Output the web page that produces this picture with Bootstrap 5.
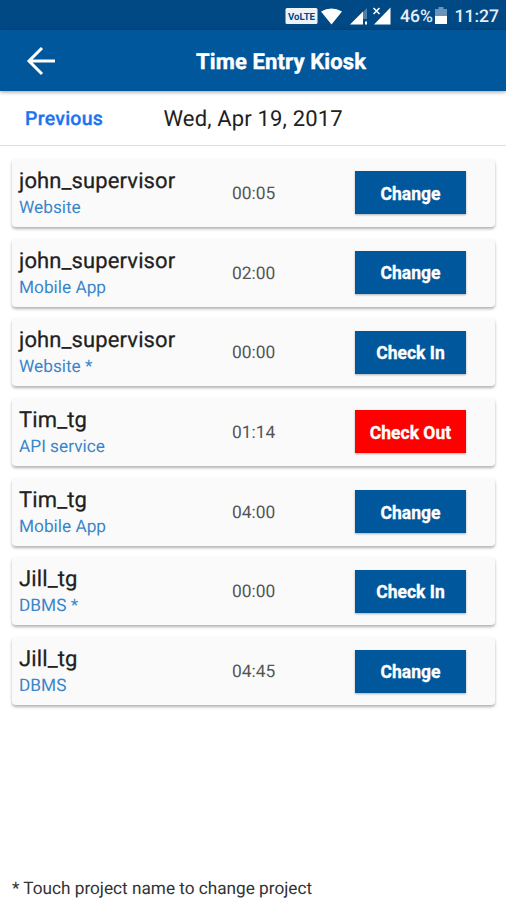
<!DOCTYPE html>
<html lang="en">
<head>
<meta charset="utf-8">
<meta name="viewport" content="width=device-width, initial-scale=1">
<title>Time Entry Kiosk</title>
<link href="https://cdn.jsdelivr.net/npm/bootstrap@5.3.0/dist/css/bootstrap.min.css" rel="stylesheet">
<style>
body{font-family:Roboto,"Liberation Sans",sans-serif;background:#fff;color:#212121;height:900px;overflow:hidden;text-rendering:geometricPrecision}
.status-bar{height:30px;background:#004984;color:#e8eef5;font-size:17.5px;font-weight:500;line-height:30px;padding:3px 7px 0 285px}
.app-bar{height:61px;background:#01579b;box-shadow:0 1px 4px rgba(0,0,0,.4);padding-left:26px;z-index:1}
.app-title{font-size:22px;font-weight:700;-webkit-text-stroke:.4px #fff;margin-left:140px;padding-top:3px;letter-spacing:.13px}
.date-bar{height:55px;border-bottom:1px solid #dedede;padding:2px 0 0 25px}
.prev-link{font-size:19.5px;font-weight:500;color:#1a73f0;width:138.5px;letter-spacing:.25px;-webkit-text-stroke:.3px #1a73f0}
.day-text{font-size:22px;color:#212121;letter-spacing:.15px;padding-top:1px}
.entries{padding:12.9px 11px 0 12px;gap:11.7px}
.entry{height:68px;background:#fafafa;border-radius:4px;box-shadow:0 2px 3px rgba(0,0,0,.3);padding-left:7px}
.who{width:213px;padding-top:4px}
.who-name{font-size:22px;line-height:26px;letter-spacing:.12px;-webkit-text-stroke:.25px #212121}
.who-project{font-size:17.25px;line-height:26px;color:#3a86cc}
.hours{font-size:17.4px;color:#555;width:123px;padding-top:2px}
.action{width:111px;height:43px;background:#01579b;color:#fff;font-size:17.5px;font-weight:700;border-radius:0;box-shadow:0 1px 2px rgba(0,0,0,.3);-webkit-text-stroke:.3px #fff}
.action span{position:relative;top:1px}
.action-out{background:#f00}
.footnote{font-size:17.2px;padding:0 12px;height:21px;line-height:21px;color:#333}
</style>
<script src="https://cdn.jsdelivr.net/npm/bootstrap@5.3.0/dist/js/bootstrap.bundle.min.js"></script>
</head>
<body class="d-flex flex-column">
<div class="status-bar d-flex align-items-center flex-shrink-0">
<svg width="111" height="28" viewBox="0 0 111 28">
<rect x="0.5" y="5" width="32" height="16" rx="1.5" fill="#eef3f8"/>
<text x="3" y="17" font-size="10" font-weight="700" fill="#004984" textLength="27" lengthAdjust="spacingAndGlyphs">VoLTE</text>
<path d="M36 8.500q10.500-6 21 0L46.500 21.500z" fill="#fff"/>
<path d="M82 5v11h-4V9z" fill="#4d80aa"/>
<path d="M65 21.500 78 8.500v13zM80 18.500h2v3h-2z" fill="#fff"/>
<path d="M89 21.500 105.500 4.500v17z" fill="#fff"/>
<path d="m88.500 5 6 6m0-6-6 6" stroke="#fff" stroke-width="1.500"/>
</svg>
<span class="pct ps-1 me-auto">46%</span>
<svg width="12" height="20" viewBox="0 0 12 20"><path d="M3.500 0h5v2H12v7H0V2h3.500z" fill="#6993b8"/><path d="M0 9h12v8H0z" fill="#fff"/></svg>
<span class="ps-2">11:27</span>
</div>
<header class="app-bar d-flex align-items-center flex-shrink-0 position-relative text-white">
<svg width="30" height="30" viewBox="0 0 30 30" fill="none" stroke="#fff" stroke-width="3"><path d="M29 15H3M16 2 3 15l13 13"/></svg>
<span class="app-title text-nowrap">Time Entry Kiosk</span>
</header>
<div class="date-bar d-flex align-items-center flex-shrink-0">
<a class="prev-link text-decoration-none" href="#">Previous</a>
<span class="day-text">Wed, Apr 19, 2017</span>
</div>
<main class="entries d-flex flex-column">
<div class="entry d-flex align-items-center"><div class="who"><div class="who-name">john_supervisor</div><div class="who-project">Website</div></div><span class="hours">00:05</span><button class="action btn border-0 p-0"><span>Change</span></button></div>
<div class="entry d-flex align-items-center"><div class="who"><div class="who-name">john_supervisor</div><div class="who-project">Mobile App</div></div><span class="hours">02:00</span><button class="action btn border-0 p-0"><span>Change</span></button></div>
<div class="entry d-flex align-items-center"><div class="who"><div class="who-name">john_supervisor</div><div class="who-project">Website *</div></div><span class="hours">00:00</span><button class="action btn border-0 p-0"><span>Check In</span></button></div>
<div class="entry d-flex align-items-center"><div class="who"><div class="who-name">Tim_tg</div><div class="who-project">API service</div></div><span class="hours">01:14</span><button class="action action-out btn border-0 p-0"><span>Check Out</span></button></div>
<div class="entry d-flex align-items-center"><div class="who"><div class="who-name">Tim_tg</div><div class="who-project">Mobile App</div></div><span class="hours">04:00</span><button class="action btn border-0 p-0"><span>Change</span></button></div>
<div class="entry d-flex align-items-center"><div class="who"><div class="who-name">Jill_tg</div><div class="who-project">DBMS *</div></div><span class="hours">00:00</span><button class="action btn border-0 p-0"><span>Check In</span></button></div>
<div class="entry d-flex align-items-center"><div class="who"><div class="who-name">Jill_tg</div><div class="who-project">DBMS</div></div><span class="hours">04:45</span><button class="action btn border-0 p-0"><span>Change</span></button></div>
</main>
<footer class="footnote mt-auto">* Touch project name to change project</footer>
</body>
</html>
